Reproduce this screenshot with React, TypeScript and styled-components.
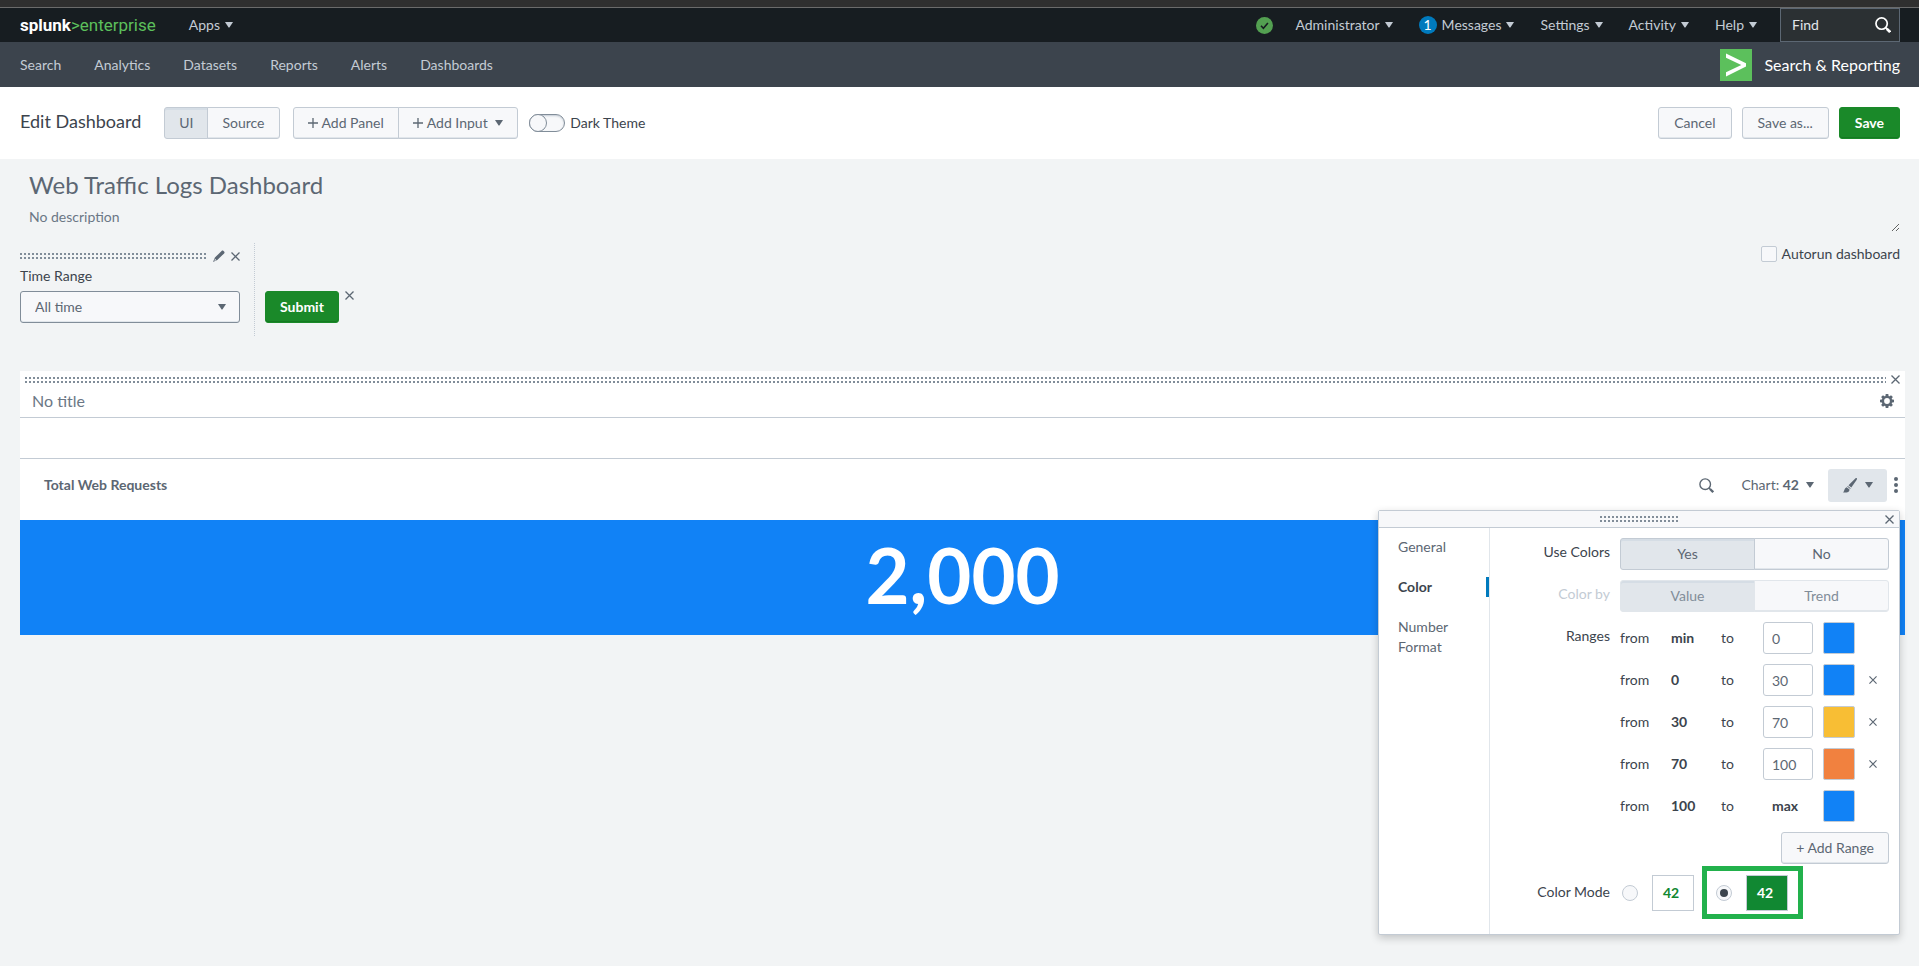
import React, { useState } from 'react';
import styled, { createGlobalStyle, css } from 'styled-components';

const font = `Lato, "Liberation Sans", sans-serif`;

const color = {
  text: '#3c444d',
  muted: '#5c6773',
  faint: '#6b7785',
  border: '#c3cbd4',
  line: '#e1e6eb',
  page: '#f2f4f5',
  control: '#f7f8fa',
  pressed: '#e1e6eb',
  green: '#1a8929',
  blue: '#1182f6',
  accent: '#007abd',
};

const Global = createGlobalStyle`
  *, *::before, *::after { box-sizing: border-box; }
  body {
    margin: 0;
    background: ${color.page};
    color: ${color.text};
    font: 14px/20px ${font};
  }
  button, input, select, textarea { font: inherit; color: inherit; margin: 0; }
  button { cursor: pointer; }
  h1, h2, h3, p { margin: 0; }
`;

const Page = styled.div`
  min-height: 100vh;
`;

/* ---------- icons ---------- */

const Caret = () => (
  <svg width="8" height="6" viewBox="0 0 8 6" fill="currentColor" aria-hidden="true">
    <path d="M0 0h8L4.4 5.5h-.8z" />
  </svg>
);

const Cross = ({ size = 9 }: { size?: number }) => (
  <svg width={size} height={size} viewBox="0 0 9 9" fill="none" stroke="currentColor" strokeWidth="1.3" aria-hidden="true">
    <path d="M.5.5l8 8M8.5.5l-8 8" />
  </svg>
);

const Plus = () => (
  <svg width="10" height="10" viewBox="0 0 10 10" stroke="currentColor" strokeWidth="1.3" aria-hidden="true">
    <path d="M5 0v10M0 5h10" />
  </svg>
);

const Magnifier = ({ size = 15, weight = 1.4 }: { size?: number; weight?: number }) => (
  <svg width={size} height={size} viewBox="0 0 15 15" fill="none" stroke="currentColor" strokeWidth={weight} aria-hidden="true">
    <circle cx="6.2" cy="6.2" r="5.3" />
    <path d="M10 10l1.2 1.2" />
    <path d="M11 11l3.2 3.2" strokeWidth={weight + 0.9} />
  </svg>
);

const Check = () => (
  <svg width="17" height="17" viewBox="0 0 17 17" aria-hidden="true">
    <circle cx="8.5" cy="8.5" r="8.5" fill="#53a051" />
    <path d="M5 8.8l2.4 2.5 4.5-5.3" fill="none" stroke="#171d21" strokeWidth="1.6" />
  </svg>
);

const Pencil = () => (
  <svg width="12" height="12" viewBox="0 0 12 12" fill="currentColor" aria-hidden="true">
    <path d="M8.6.9c.5-.6 1.3-.6 1.9 0l.6.6c.6.6.6 1.4 0 1.9L4.3 10.1 0 12l1.9-4.4z" />
    <path d="M1.9 8.8l1.3 1.3-1.7.8z" fill="#f2f4f5" />
  </svg>
);

const Brush = () => (
  <svg width="14" height="15" viewBox="0 0 14 15" fill="currentColor" aria-hidden="true">
    <path d="M13.8.2c.4.5.1 1.2-.4 2L8.3 9.600 5.500 7.200 11.800.9c.8-.8 1.500-1.200 2-.7z" />
    <path d="M4.8 8l2.800 2.300-.4.600L4.200 8.600z" />
    <path d="M3.700 9.200l2.800 2.200c.2 2.600-3.200 3.600-6.500 3C1.700 13.200 1 10 3.700 9.200z" />
  </svg>
);

const Gear = () => (
  <svg width="14" height="14" viewBox="0 0 14 14" aria-hidden="true">
    <g fill="currentColor">
      {[0, 45, 90, 135].map((a) => (
        <path key={a} d="M5.7 0h2.600l.4 3v8l-.4 3H5.700l-.4-3V3z" transform={`rotate(${a} 7 7)`} />
      ))}
      <circle cx="7" cy="7" r="5.2" />
    </g>
    <circle cx="7" cy="7" r="2.9" fill="#fff" />
  </svg>
);

const Kebab = () => (
  <svg width="4" height="16" viewBox="0 0 4 16" fill="currentColor" aria-hidden="true">
    <circle cx="2" cy="2" r="2" />
    <circle cx="2" cy="8" r="2" />
    <circle cx="2" cy="14" r="2" />
  </svg>
);

const AppLogo = () => (
  <svg width="32" height="32" viewBox="0 0 32 32" aria-hidden="true">
    <path fill="#5cc05c" d="M0 0h32v32H0z" />
    <path fill="#fff" d="M6 4.500l20 9.700v3.400L6 27.500v-4.200l15.300-7.400L6 8.700z" />
  </svg>
);

/* ---------- shared parts ---------- */

const IconButton = styled.button`
  display: inline-flex;
  padding: 0;
  border: 0;
  background: none;
  color: ${color.muted};
`;

const Grip = styled.div<{ $width?: string }>`
  ${(p) => (p.$width ? `width: ${p.$width};` : 'flex: 1;')}
  height: 6px;
  background: conic-gradient(from 270deg at 2px 2px, #818d99 90deg, transparent 0) 0 0 / 4px 4px;
`;

const Button = styled.button<{ $primary?: boolean }>`
  display: inline-flex;
  align-items: center;
  justify-content: center;
  gap: 4px;
  height: 32px;
  padding: 0 14px;
  border: 1px solid ${color.border};
  border-radius: 3px;
  background: ${color.control};
  box-shadow: inset 0 -1px 0 ${color.line};
  color: ${color.muted};
  ${(p) =>
    p.$primary &&
    css`
      border-color: ${color.green};
      background: ${color.green};
      box-shadow: inset 0 -1px 0 #157a22;
      color: #fff;
      font-weight: 700;
    `}
`;

const Segments = styled.div`
  display: flex;
`;

const Segment = styled(Button)<{ $grow?: boolean }>`
  ${(p) => p.$grow && 'flex: 1;'}
  & + & { margin-left: -1px; }
  &:not(:first-child) { border-top-left-radius: 0; border-bottom-left-radius: 0; }
  &:not(:last-child) { border-top-right-radius: 0; border-bottom-right-radius: 0; }
  &[aria-pressed='true'] {
    background: ${color.pressed};
    box-shadow: inset 0 2px 0 #d5dde5;
    color: ${color.muted};
  }
  &:disabled { border-color: ${color.line}; color: #818d99; cursor: default; }
`;

/* ---------- top bars ---------- */

const WindowEdge = styled.div`
  height: 8px;
  background: #2f2f2f;
  border-bottom: 1px solid #6b6b6b;
`;

const TopBar = styled.header`
  display: flex;
  align-items: center;
  height: 34px;
  padding: 0 19px 0 20px;
  background: #171d21;
  color: ${color.border};
`;

const Brand = styled.a`
  margin-right: 33px;
  color: #fff;
  font: 700 17px/24px Roboto, sans-serif;
  text-decoration: none;
  span { color: #5cc05c; font-weight: 400; }
`;

const MenuButton = styled.button`
  display: inline-flex;
  align-items: center;
  gap: 5px;
  padding: 0;
  border: 0;
  background: none;
`;

const Account = styled.div`
  display: flex;
  align-items: center;
  gap: 26px;
  margin-left: auto;
  height: 34px;
`;

const User = styled.div`
  display: flex;
  align-items: center;
  gap: 22px;
`;

const Badge = styled.span`
  width: 18px;
  height: 18px;
  border-radius: 9px;
  background: ${color.accent};
  color: #fff;
  line-height: 18px;
  text-align: center;
`;

const Find = styled.label`
  display: flex;
  align-items: center;
  width: 120px;
  height: 34px;
  padding: 0 8px 0 11px;
  margin-left: -3px;
  border: 1px solid #5c6773;
  background: #2b3033;
  color: #fff;
  input {
    flex: 1;
    min-width: 0;
    padding: 0;
    border: 0;
    background: none;
    &::placeholder { color: #e1e6eb; opacity: 1; }
  }
`;

const NavBar = styled.nav`
  display: flex;
  align-items: center;
  gap: 33px;
  height: 45px;
  padding: 0 19px 0 20px;
  background: #3c444d;
  a { color: ${color.border}; text-decoration: none; }
`;

const AppLink = styled.a`
  && {
    display: flex;
    align-items: center;
    gap: 12px;
    margin-left: auto;
    color: #fff;
    font-size: 16px;
  }
`;

/* ---------- edit toolbar ---------- */

const Toolbar = styled.div`
  display: flex;
  align-items: center;
  height: 72px;
  padding: 0 19px 0 20px;
  background: #fff;
`;

const PageName = styled.h2`
  margin-right: 23px;
  padding-bottom: 4px;
  font-size: 18px;
  font-weight: 400;
  line-height: 24px;
`;

const Modes = styled(Segments)`
  margin-right: 13px;
`;

const Switch = styled.label`
  display: flex;
  align-items: center;
  gap: 5px;
  margin-left: 11px;
  input {
    appearance: none;
    display: flex;
    width: 36px;
    height: 18px;
    border: 1px solid #818d99;
    border-radius: 9px;
    background: ${color.control};
    box-shadow: inset 0 1px 2px ${color.border};
    &::before {
      content: '';
      width: 18px;
      height: 18px;
      margin: -1px;
      border: 1px solid #818d99;
      border-radius: 9px;
      background: ${color.control};
    }
    &:checked { justify-content: flex-end; background: ${color.green}; }
  }
`;

const Actions = styled.div`
  display: flex;
  gap: 10px;
  margin-left: auto;
  button { padding: 0 15px; }
`;

/* ---------- dashboard head ---------- */

const Head = styled.section`
  display: flex;
  flex-direction: column;
  padding: 9px 19px 0 20px;
`;

const TitleInput = styled.input`
  height: 32px;
  padding: 0 9px;
  border: 0;
  background: none;
  color: ${color.muted};
  font-size: 24px;
`;

const Description = styled.textarea`
  display: block;
  width: 100%;
  height: 32px;
  padding: 7px 9px 4px;
  border: 0;
  background: none;
  overflow: hidden;
  &::placeholder { color: ${color.faint}; opacity: 1; }
`;

const Fieldset = styled.section`
  display: flex;
  align-items: flex-start;
  height: 93px;
  margin: 11px 19px 35px 20px;
`;

const InputCell = styled.div`
  width: 235px;
  height: 93px;
  padding-right: 14px;
  border-right: 1px dotted ${color.border};
`;

const InputTools = styled.div`
  display: flex;
  align-items: center;
  gap: 6px;
  height: 12px;
  margin: 7px 0 4px;
`;

const FieldLabel = styled.label`
  display: block;
  margin-bottom: 5px;
`;

const SelectBox = styled.div`
  display: grid;
  align-items: center;
  color: ${color.muted};
  select, svg { grid-area: 1 / 1; }
  svg { justify-self: end; margin-right: 14px; pointer-events: none; }
  select {
    appearance: none;
    height: 32px;
    padding: 0 14px;
    border: 1px solid #818d99;
    border-radius: 3px;
    background: ${color.control};
    box-shadow: inset 0 -1px 0 ${color.line};
  }
`;

const SubmitCell = styled.div`
  display: flex;
  align-items: flex-start;
  gap: 6px;
  padding: 48px 0 0 10px;
`;

const Autorun = styled.label`
  display: flex;
  align-items: center;
  gap: 5px;
  margin: 1px 0 0 auto;
  input {
    appearance: none;
    width: 16px;
    height: 16px;
    border: 1px solid ${color.border};
    border-radius: 2px;
    background: ${color.control};
    &:checked { background: ${color.accent}; }
  }
`;

/* ---------- panel ---------- */

const Panel = styled.section`
  margin: 0 14px 0 20px;
  background: #fff;
`;

const PanelGrip = styled.div`
  display: flex;
  align-items: center;
  gap: 5px;
  height: 17px;
  padding: 0 5px;
`;

const PanelTitle = styled.div`
  display: flex;
  align-items: center;
  height: 30px;
  padding: 0 11px 3px 12px;
  border-bottom: 1px solid ${color.border};
  input {
    flex: 1;
    padding: 0;
    border: 0;
    background: none;
    font-size: 16px;
    &::placeholder { color: ${color.faint}; opacity: 1; }
  }
`;

const EmptyRow = styled.div`
  height: 41px;
  border-bottom: 1px solid ${color.border};
`;

const ElementHead = styled.div`
  position: relative;
  display: flex;
  align-items: center;
  height: 61px;
  padding: 0 7px 9px 24px;
  color: ${color.muted};
`;

const ElementTitle = styled.h3`
  margin-right: auto;
  font-size: 14px;
  font-weight: 700;
`;

const ChartMenu = styled(MenuButton)`
  gap: 7px;
  margin: 0 14px 0 27px;
`;

const FormatButton = styled(MenuButton)`
  justify-content: center;
  gap: 8px;
  width: 59px;
  height: 33px;
  margin-right: 7px;
  border-radius: 3px;
  background: ${color.pressed};
`;

const SingleValue = styled.div`
  height: 115px;
  background: ${color.blue};
  color: #fff;
  font-size: 76px;
  font-weight: 700;
  line-height: 110px;
  text-align: center;
`;

/* ---------- format popup ---------- */

const Popup = styled.div`
  position: absolute;
  top: 51px;
  right: 5px;
  z-index: 1;
  width: 522px;
  border: 1px solid ${color.border};
  border-radius: 2px;
  background: #fff;
  box-shadow: 0 3px 8px rgba(0, 0, 0, 0.2);
  color: ${color.text};
`;

const PopupHead = styled.div`
  display: grid;
  grid-template-columns: 1fr auto 1fr;
  align-items: center;
  height: 17px;
  padding: 0 5px;
  border-bottom: 1px solid ${color.border};
  background: ${color.control};
  button { justify-self: end; grid-column: 3; }
  div { grid-column: 2; }
`;

const PopupBody = styled.div`
  display: flex;
`;

const Tabs = styled.div`
  display: flex;
  flex-direction: column;
  width: 111px;
  padding-top: 9px;
  border-right: 1px solid ${color.line};
`;

const Tab = styled.button`
  padding: 0 30px 0 19px;
  margin-bottom: 20px;
  border: 0;
  background: none;
  color: ${color.muted};
  text-align: left;
  &[aria-selected='true'] {
    border-right: 3px solid ${color.accent};
    color: ${color.text};
    font-weight: 700;
  }
`;

const Form = styled.div`
  flex: 1;
  display: flex;
  flex-direction: column;
  gap: 10px;
  padding: 10px 10px 15px;
`;

const Row = styled.div<{ $disabled?: boolean }>`
  display: grid;
  grid-template-columns: 110px 1fr;
  column-gap: 10px;
  color: ${(p) => (p.$disabled ? color.border : color.text)};
`;

const RowLabel = styled.span<{ $tall?: boolean }>`
  line-height: ${(p) => (p.$tall ? 52 : 28)}px;
  text-align: right;
`;

const RangeList = styled.div`
  display: flex;
  flex-direction: column;
  gap: 10px;
`;

const Range = styled.div`
  display: grid;
  grid-template-columns: 51px 50px 42px 60px 46px auto;
  align-items: center;
  justify-content: start;
  height: 32px;
  input[type='text'] {
    width: 50px;
    height: 32px;
    padding: 0 8px;
    border: 1px solid ${color.border};
    border-radius: 3px;
    background: #fff;
    color: ${color.muted};
  }
`;

const MaxLabel = styled.b`
  padding-left: 9px;
`;

const Swatch = styled.button<{ $fill: string }>`
  width: 32px;
  height: 32px;
  padding: 0;
  border: 1px solid ${color.border};
  border-radius: 2px;
  background: ${(p) => p.$fill};
`;

const AddRange = styled(Button)`
  align-self: flex-end;
`;

const ModeRow = styled(Row)`
  margin-top: -8px;
`;

const ModeOptions = styled.div`
  display: flex;
  align-items: center;
  gap: 8px;
  padding-left: 2px;
`;

const ModeOption = styled.label<{ $marked?: boolean }>`
  display: flex;
  align-items: center;
  gap: 14px;
  ${(p) =>
    p.$marked &&
    css`
      height: 53px;
      padding: 0 10px 0 9px;
      border: 5px solid #22b14c;
    `}
  input {
    appearance: none;
    display: grid;
    place-items: center;
    width: 16px;
    height: 16px;
    border: 1px solid ${color.border};
    border-radius: 8px;
    background: ${color.control};
    &:checked::before {
      content: '';
      width: 8px;
      height: 8px;
      border-radius: 4px;
      background: ${color.text};
    }
  }
`;

const Sample = styled.span<{ $filled?: boolean }>`
  width: 42px;
  height: 36px;
  padding-left: 10px;
  border: 1px solid ${color.border};
  background: ${(p) => (p.$filled ? '#118832' : '#fff')};
  color: ${(p) => (p.$filled ? '#fff' : '#118832')};
  font-weight: 700;
  line-height: 34px;
`;

const ranges = [
  { from: 'min', to: '0', fill: color.blue, removable: false },
  { from: '0', to: '30', fill: color.blue, removable: true },
  { from: '30', to: '70', fill: '#f8be34', removable: true },
  { from: '70', to: '100', fill: '#f1813f', removable: true },
  { from: '100', to: null, fill: color.blue, removable: false },
];

const navItems = ['Search', 'Analytics', 'Datasets', 'Reports', 'Alerts', 'Dashboards'];

const FormatPopup = () => {
  const [useColors, setUseColors] = useState(true);
  const [mode, setMode] = useState('block');
  return (
    <Popup role="dialog" aria-label="Format visualization">
      <PopupHead>
        <Grip $width="78px" />
        <IconButton aria-label="Close"><Cross /></IconButton>
      </PopupHead>
      <PopupBody>
        <Tabs role="tablist">
          <Tab role="tab" aria-selected={false}>General</Tab>
          <Tab role="tab" aria-selected={true}>Color</Tab>
          <Tab role="tab" aria-selected={false}>Number Format</Tab>
        </Tabs>
        <Form>
          <Row>
            <RowLabel id="use-colors">Use Colors</RowLabel>
            <Segments role="group" aria-labelledby="use-colors">
              <Segment $grow aria-pressed={useColors} onClick={() => setUseColors(true)}>Yes</Segment>
              <Segment $grow aria-pressed={!useColors} onClick={() => setUseColors(false)}>No</Segment>
            </Segments>
          </Row>
          <Row $disabled>
            <RowLabel id="color-by">Color by</RowLabel>
            <Segments role="group" aria-labelledby="color-by">
              <Segment $grow disabled aria-pressed={true}>Value</Segment>
              <Segment $grow disabled aria-pressed={false}>Trend</Segment>
            </Segments>
          </Row>
          <Row>
            <RowLabel>Ranges</RowLabel>
            <RangeList>
              {ranges.map((r) => (
                <Range key={r.from}>
                  <span>from</span>
                  <b>{r.from}</b>
                  <span>to</span>
                  {r.to === null ? (
                    <MaxLabel>max</MaxLabel>
                  ) : (
                    <input type="text" defaultValue={r.to} aria-label={`Range from ${r.from} to`} />
                  )}
                  <Swatch $fill={r.fill} aria-label={`Color from ${r.from}`} />
                  {r.removable && (
                    <IconButton aria-label={`Remove range from ${r.from}`}><Cross size={8} /></IconButton>
                  )}
                </Range>
              ))}
            </RangeList>
          </Row>
          <AddRange>+ Add Range</AddRange>
          <ModeRow>
            <RowLabel $tall>Color Mode</RowLabel>
            <ModeOptions>
              <ModeOption>
                <input type="radio" name="mode" checked={mode === 'none'} onChange={() => setMode('none')} />
                <Sample>42</Sample>
              </ModeOption>
              <ModeOption $marked>
                <input type="radio" name="mode" checked={mode === 'block'} onChange={() => setMode('block')} />
                <Sample $filled>42</Sample>
              </ModeOption>
            </ModeOptions>
          </ModeRow>
        </Form>
      </PopupBody>
    </Popup>
  );
};

export default function App() {
  return (
    <Page>
      <Global />
      <WindowEdge />
      <TopBar>
        <Brand href="#">splunk<span>&gt;enterprise</span></Brand>
        <MenuButton>Apps <Caret /></MenuButton>
        <Account>
          <User>
            <Check />
            <MenuButton>Administrator <Caret /></MenuButton>
          </User>
          <MenuButton><Badge>1</Badge> Messages <Caret /></MenuButton>
          <MenuButton>Settings <Caret /></MenuButton>
          <MenuButton>Activity <Caret /></MenuButton>
          <MenuButton>Help <Caret /></MenuButton>
          <Find>
            <input type="text" placeholder="Find" aria-label="Find" />
            <Magnifier size={16} weight={1.6} />
          </Find>
        </Account>
      </TopBar>
      <NavBar>
        {navItems.map((item) => <a key={item} href="#">{item}</a>)}
        <AppLink href="#"><AppLogo />Search &amp; Reporting</AppLink>
      </NavBar>
      <Toolbar>
        <PageName>Edit Dashboard</PageName>
        <Modes>
          <Segment aria-pressed={true}>UI</Segment>
          <Segment aria-pressed={false}>Source</Segment>
        </Modes>
        <Segments>
          <Segment><Plus />Add Panel</Segment>
          <Segment><Plus />Add Input&nbsp;<Caret /></Segment>
        </Segments>
        <Switch><input type="checkbox" role="switch" />Dark Theme</Switch>
        <Actions>
          <Button>Cancel</Button>
          <Button>Save as...</Button>
          <Button $primary>Save</Button>
        </Actions>
      </Toolbar>
      <main>
        <Head>
          <TitleInput defaultValue="Web Traffic Logs Dashboard" aria-label="Dashboard title" />
          <Description placeholder="No description" aria-label="Dashboard description" />
        </Head>
        <Fieldset>
          <InputCell>
            <InputTools>
              <Grip />
              <IconButton aria-label="Edit input"><Pencil /></IconButton>
              <IconButton aria-label="Remove input"><Cross /></IconButton>
            </InputTools>
            <FieldLabel htmlFor="time-range">Time Range</FieldLabel>
            <SelectBox>
              <select id="time-range"><option>All time</option></select>
              <Caret />
            </SelectBox>
          </InputCell>
          <SubmitCell>
            <Button $primary>Submit</Button>
            <IconButton aria-label="Remove submit button"><Cross /></IconButton>
          </SubmitCell>
          <Autorun><input type="checkbox" />Autorun dashboard</Autorun>
        </Fieldset>
        <Panel>
          <PanelGrip>
            <Grip />
            <IconButton aria-label="Remove panel"><Cross /></IconButton>
          </PanelGrip>
          <PanelTitle>
            <input type="text" placeholder="No title" aria-label="Panel title" />
            <IconButton aria-label="Panel settings"><Gear /></IconButton>
          </PanelTitle>
          <EmptyRow />
          <ElementHead>
            <ElementTitle>Total Web Requests</ElementTitle>
            <IconButton aria-label="Edit search"><Magnifier /></IconButton>
            <ChartMenu><span>Chart: <b>42</b></span><Caret /></ChartMenu>
            <FormatButton aria-label="Format"><Brush /><Caret /></FormatButton>
            <IconButton aria-label="More actions"><Kebab /></IconButton>
            <FormatPopup />
          </ElementHead>
          <SingleValue>2,000</SingleValue>
        </Panel>
      </main>
    </Page>
  );
}
